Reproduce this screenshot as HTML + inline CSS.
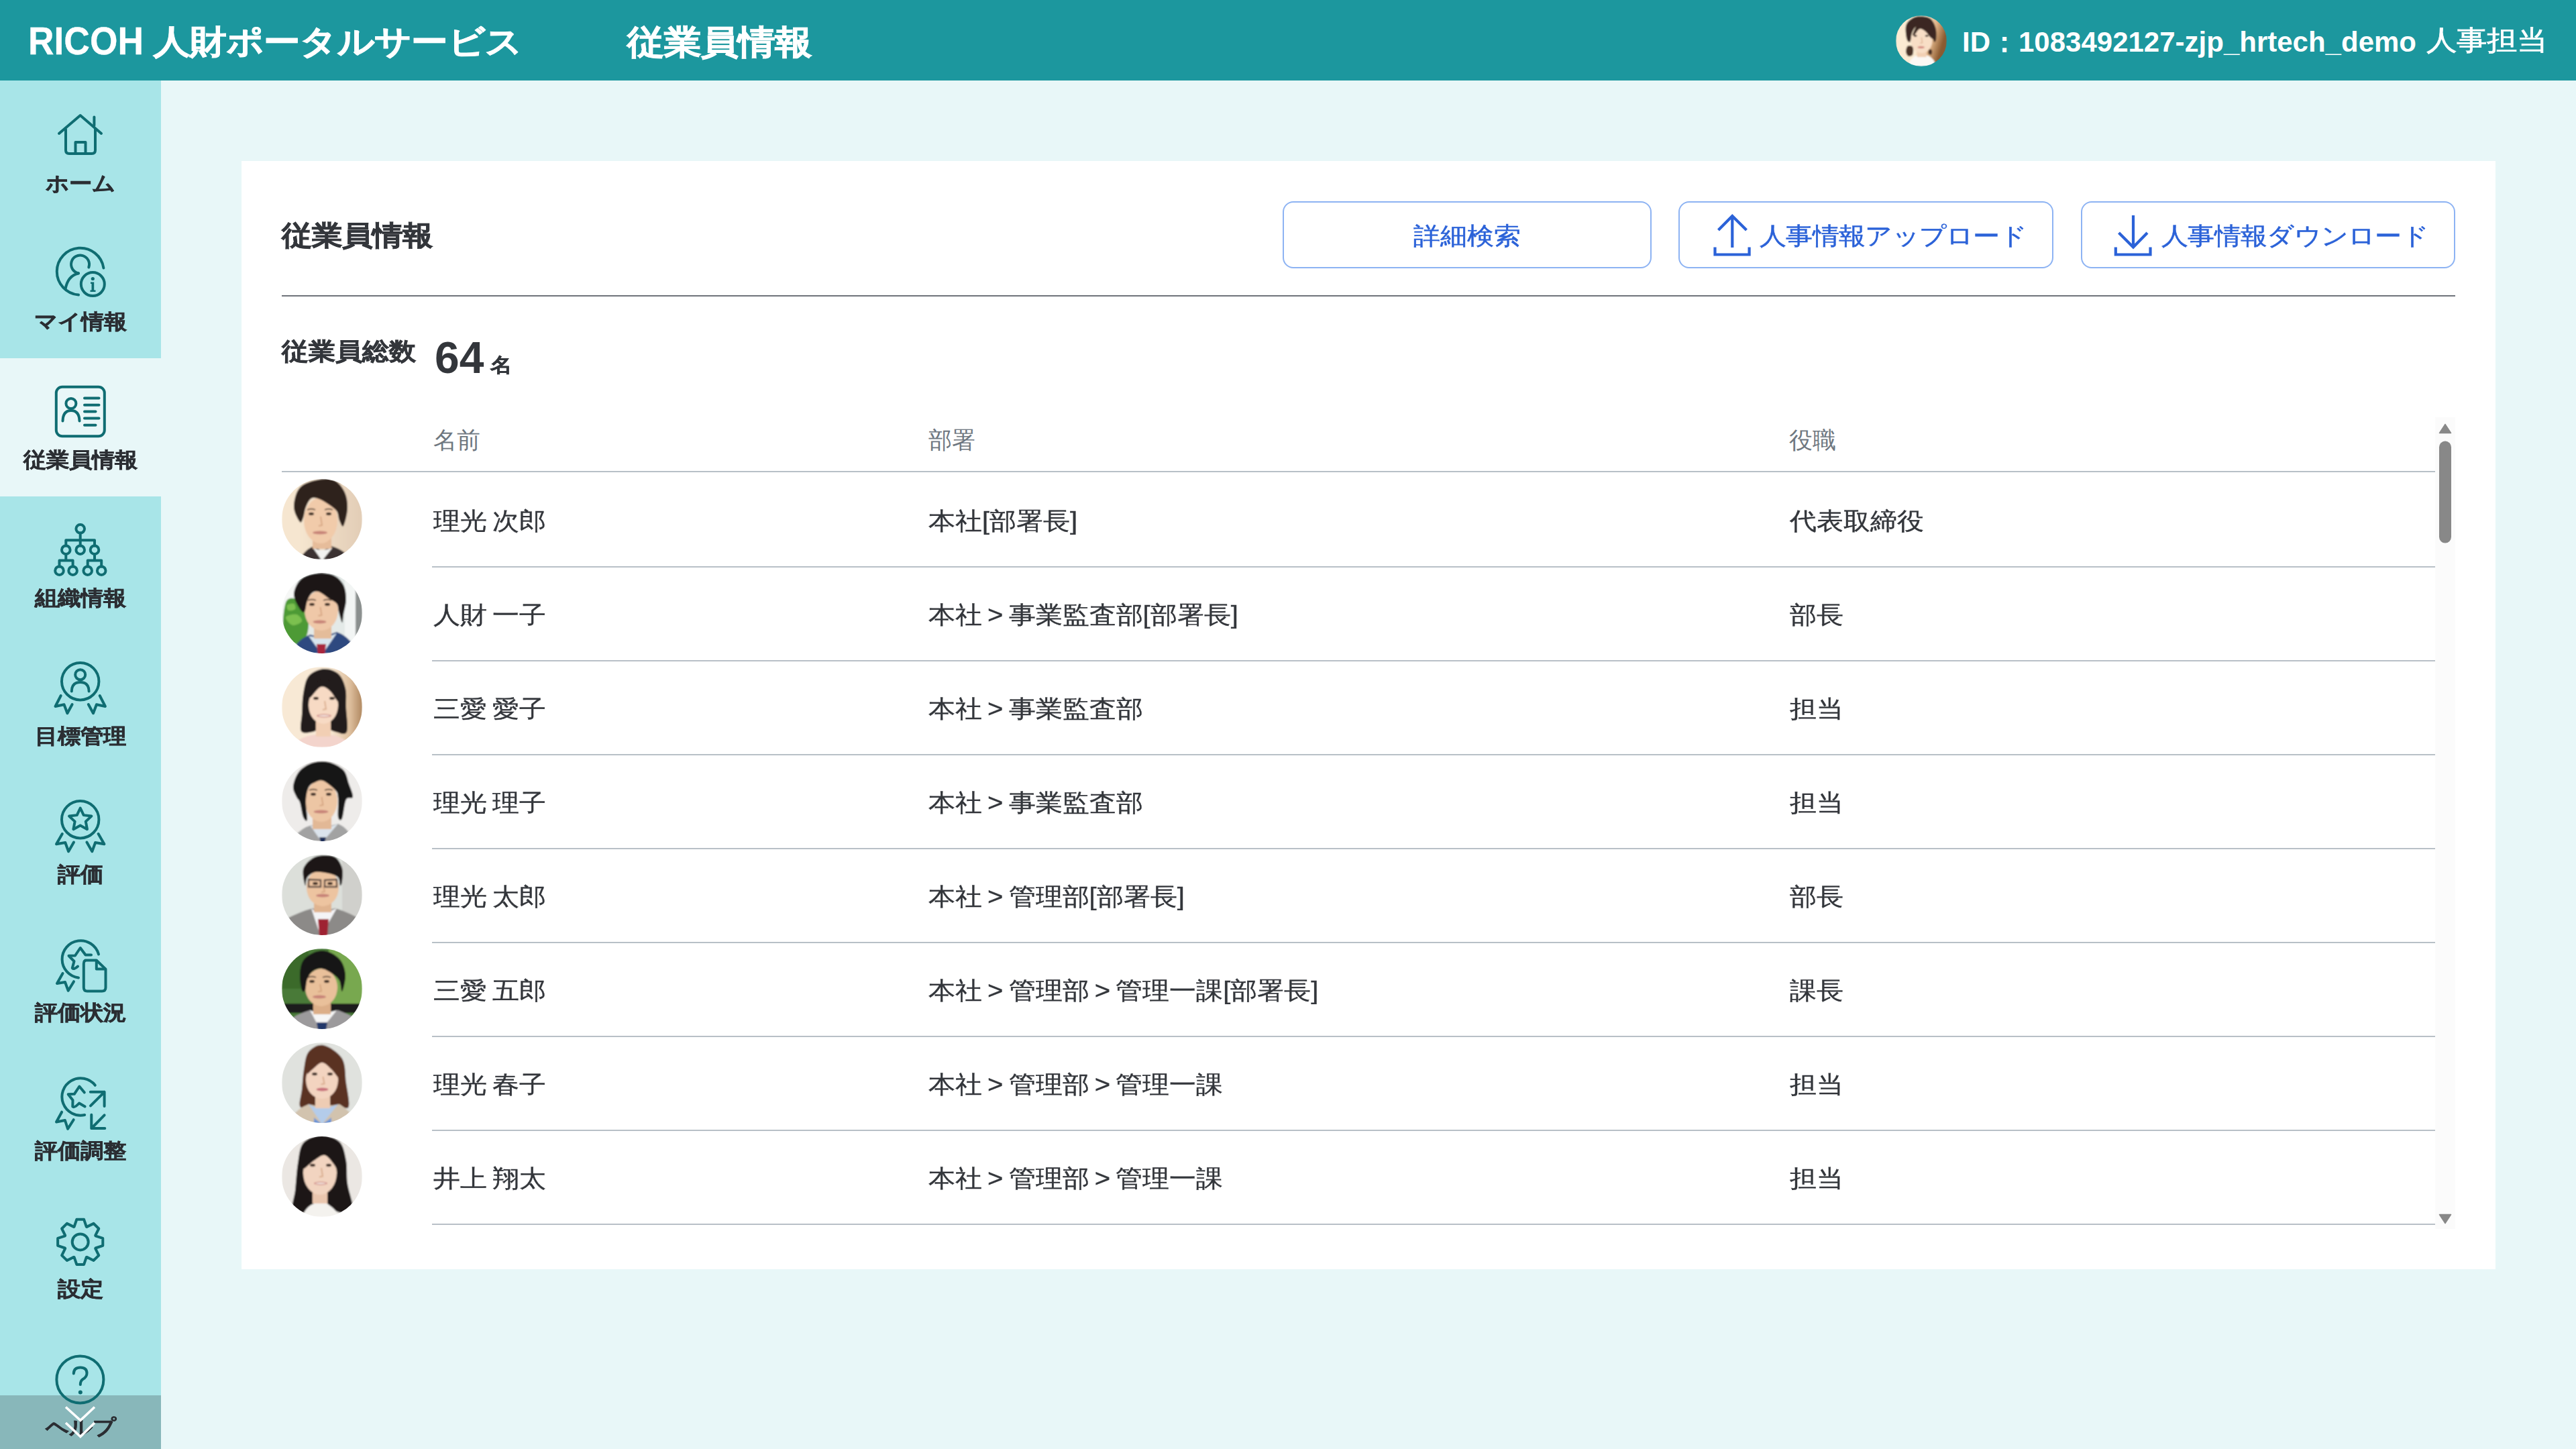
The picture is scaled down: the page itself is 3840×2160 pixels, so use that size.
<!DOCTYPE html>
<html lang="ja"><head><meta charset="utf-8"><style>
html,body{margin:0;padding:0}
body{width:3840px;height:2160px;overflow:hidden;position:relative;background:#E8F7F8;font-family:"Liberation Sans",sans-serif;color:#33363B}
.a{position:absolute;white-space:nowrap;line-height:1}
#hdr{position:absolute;left:0;top:0;width:3840px;height:120px;background:#1C979E}
#side{position:absolute;left:0;top:120px;width:240px;height:2040px;background:#A8E5E8}
#sel{position:absolute;left:0;top:534px;width:240px;height:206px;background:#E8F7F8}
.lbl{position:absolute;left:0;width:240px;text-align:center;font-size:34px;font-weight:bold;color:#2B2E33;line-height:1;white-space:nowrap;-webkit-text-stroke:0.6px #2B2E33}
#card{position:absolute;left:360px;top:240px;width:3360px;height:1652px;background:#fff}
.btn{position:absolute;top:300px;height:100px;box-sizing:border-box;border:2px solid #8DB3F3;border-radius:16px;background:#fff}
.bt{color:#2B62D8;font-size:40px;-webkit-text-stroke:0.5px #2B62D8}
.hline{position:absolute;height:2px;background:#B8C0C7}
.th{color:#6E7780;font-size:35px}
.td{color:#33363B;font-size:40px;word-spacing:-3px;-webkit-text-stroke:0.4px #33363B}
svg{position:absolute;overflow:visible}
.sy{transform:scaleY(0.9);transform-origin:50% 55%}
</style></head><body>

<div id="hdr"></div>
<div class="a sy" style="left:42px;top:35px;font-size:54px;letter-spacing:0.3px;font-weight:bold;color:#fff;-webkit-text-stroke:1px #fff"><span style="font-size:58px;letter-spacing:0;line-height:0;display:inline-block;transform:scale(0.92,1.111);transform-origin:0 0;margin-right:-15px;-webkit-text-stroke:0.3px #fff">RICOH</span> 人財ポータルサービス</div>
<div class="a sy" style="left:935px;top:36px;font-size:55px;font-weight:bold;color:#fff;-webkit-text-stroke:1px #fff">従業員情報</div>
<div class="a" style="left:2925px;top:42px;font-size:42px;font-weight:bold;color:#fff">ID：1083492127-zjp_hrtech_demo</div>
<div class="a sy" style="left:3617px;top:37px;font-size:45px;color:#fff;-webkit-text-stroke:0.8px #fff">人事担当</div>
<div id="side"></div>
<div id="sel"></div>
<div style="position:absolute;left:0;top:2080px;width:240px;height:80px;background:#88B7BA"></div>
<div class="lbl sy" style="top:256px">ホーム</div>
<div class="lbl sy" style="top:462px">マイ情報</div>
<div class="lbl sy" style="top:668px">従業員情報</div>
<div class="lbl sy" style="top:874px">組織情報</div>
<div class="lbl sy" style="top:1080px">目標管理</div>
<div class="lbl sy" style="top:1286px">評価</div>
<div class="lbl sy" style="top:1492px">評価状況</div>
<div class="lbl sy" style="top:1698px">評価調整</div>
<div class="lbl sy" style="top:1904px">設定</div>
<div class="lbl sy" style="top:2110px">ヘルプ</div>
<svg style="left:0;top:0" width="240" height="2160"><path stroke="#0F6D72" stroke-width="4" fill="none" stroke-linecap="round" stroke-linejoin="round" d="M88 199 L119.7 172 L151 199"/><path stroke="#0F6D72" stroke-width="4" fill="none" stroke-linecap="round" stroke-linejoin="round" d="M140.4 174.5 L140.4 187"/><path stroke="#0F6D72" stroke-width="4" fill="none" stroke-linecap="round" stroke-linejoin="round" d="M98 193 L98 224 Q98 229 103 229 L137 229 Q142 229 142 224 L142 193"/><path stroke="#0F6D72" stroke-width="4" fill="none" stroke-linecap="round" stroke-linejoin="round" d="M112.5 229 L112.5 212 L127.5 212 L127.5 229"/><path stroke="#0F6D72" stroke-width="4" fill="none" stroke-linecap="round" stroke-linejoin="round" d="M154.4 399.5 A35 35 0 1 0 117 439.6"/><path stroke="#0F6D72" stroke-width="4" fill="none" stroke-linecap="round" stroke-linejoin="round" d="M132.3 398.5 A13.5 13.5 0 1 0 117 407.3"/><path stroke="#0F6D72" stroke-width="4" fill="none" stroke-linecap="round" stroke-linejoin="round" d="M117 407.5 Q101 411 97.5 431"/><circle stroke="#0F6D72" stroke-width="4" fill="none" stroke-linecap="round" stroke-linejoin="round" cx="138.3" cy="423.6" r="17.5"/><circle fill="#0F6D72" cx="138.3" cy="415.5" r="2.6"/><path fill="#0F6D72" d="M135 420.5 L140.2 420.5 L140.2 432.5 L142.5 432.5 L142.5 435 L134.5 435 L134.5 432.5 L136.5 432.5 L136.5 423 L135 423 Z"/><rect stroke="#0F6D72" stroke-width="4" fill="none" stroke-linecap="round" stroke-linejoin="round" x="83.8" y="576.8" width="72" height="73.5" rx="9"/><circle stroke="#0F6D72" stroke-width="4" fill="none" stroke-linecap="round" stroke-linejoin="round" cx="105.9" cy="601.5" r="7.5" stroke-width="3.5"/><path stroke="#0F6D72" stroke-width="4" fill="none" stroke-linecap="round" stroke-linejoin="round" stroke-width="3.5" d="M93.5 627.5 Q94 612 106 612 Q118 612 118.5 627.5"/><path stroke="#0F6D72" stroke-width="4" fill="none" stroke-linecap="round" stroke-linejoin="round" stroke-width="3.5" d="M126 593.5 L147.5 593.5"/><path stroke="#0F6D72" stroke-width="4" fill="none" stroke-linecap="round" stroke-linejoin="round" stroke-width="3.5" d="M126 603.7 L147.5 603.7"/><path stroke="#0F6D72" stroke-width="4" fill="none" stroke-linecap="round" stroke-linejoin="round" stroke-width="3.5" d="M126 613.6 L142.5 613.6"/><path stroke="#0F6D72" stroke-width="4" fill="none" stroke-linecap="round" stroke-linejoin="round" stroke-width="3.5" d="M126 623.5 L147.5 623.5"/><path stroke="#0F6D72" stroke-width="4" fill="none" stroke-linecap="round" stroke-linejoin="round" stroke-width="3.5" d="M126 633.7 L142.5 633.7"/><circle stroke="#0F6D72" stroke-width="4" fill="none" stroke-linecap="round" stroke-linejoin="round" cx="119.7" cy="788.3" r="6.3"/><path stroke="#0F6D72" stroke-width="4" fill="none" stroke-linecap="round" stroke-linejoin="round" stroke-linecap="butt" d="M119.7 794.6 L119.7 813.4 M98.3 813.4 L98.3 805.2 L141 805.2 L141 813.4"/><circle stroke="#0F6D72" stroke-width="4" fill="none" stroke-linecap="round" stroke-linejoin="round" cx="98.3" cy="819.7" r="6.3"/><circle stroke="#0F6D72" stroke-width="4" fill="none" stroke-linecap="round" stroke-linejoin="round" cx="119.7" cy="819.7" r="6.3"/><circle stroke="#0F6D72" stroke-width="4" fill="none" stroke-linecap="round" stroke-linejoin="round" cx="141" cy="819.7" r="6.3"/><path stroke="#0F6D72" stroke-width="4" fill="none" stroke-linecap="round" stroke-linejoin="round" stroke-linecap="butt" d="M98.3 826 L98.3 835.6 M88.5 844.4 L88.5 835.6 L108.6 835.6 L108.6 844.4 M141 826 L141 835.6 M130.7 844.4 L130.7 835.6 L151.2 835.6 L151.2 844.4"/><circle stroke="#0F6D72" stroke-width="4" fill="none" stroke-linecap="round" stroke-linejoin="round" cx="88.5" cy="850.7" r="6.3"/><circle stroke="#0F6D72" stroke-width="4" fill="none" stroke-linecap="round" stroke-linejoin="round" cx="108.6" cy="850.7" r="6.3"/><circle stroke="#0F6D72" stroke-width="4" fill="none" stroke-linecap="round" stroke-linejoin="round" cx="130.7" cy="850.7" r="6.3"/><circle stroke="#0F6D72" stroke-width="4" fill="none" stroke-linecap="round" stroke-linejoin="round" cx="151.2" cy="850.7" r="6.3"/><circle stroke="#0F6D72" stroke-width="4" fill="none" stroke-linecap="round" stroke-linejoin="round" cx="119.7" cy="1015.7" r="27.7"/><circle stroke="#0F6D72" stroke-width="4" fill="none" stroke-linecap="round" stroke-linejoin="round" cx="119.7" cy="1005.7" r="7.5"/><path stroke="#0F6D72" stroke-width="4" fill="none" stroke-linecap="round" stroke-linejoin="round" d="M106.8 1030.5 Q107 1017 119.7 1017 Q132.4 1017 132.6 1030.5"/><path stroke="#0F6D72" stroke-width="4" fill="none" stroke-linecap="round" stroke-linejoin="round" d="M90.7 1037 L82.5 1053 L95.5 1050.2 L100.4 1063.3 L107.6 1050"/><path stroke="#0F6D72" stroke-width="4" fill="none" stroke-linecap="round" stroke-linejoin="round" d="M148.7 1037 L156.9 1053 L143.9 1050.2 L139 1063.3 L131.8 1050"/><circle stroke="#0F6D72" stroke-width="4" fill="none" stroke-linecap="round" stroke-linejoin="round" cx="119.7" cy="1221.7" r="27.7"/><path stroke="#0F6D72" stroke-width="4" fill="none" stroke-linecap="round" stroke-linejoin="round" d="M119.70 1204.50 L124.70 1215.12 L136.34 1216.59 L127.78 1224.63 L129.99 1236.16 L119.70 1230.50 L109.41 1236.16 L111.62 1224.63 L103.06 1216.59 L114.70 1215.12 Z"/><path stroke="#0F6D72" stroke-width="4" fill="none" stroke-linecap="round" stroke-linejoin="round" d="M92.8 1243 L84 1258.3 L97.3 1256 L102.1 1269.3 L110 1255.5"/><path stroke="#0F6D72" stroke-width="4" fill="none" stroke-linecap="round" stroke-linejoin="round" d="M146.6 1243 L155.4 1258.3 L142.1 1256 L137.3 1269.3 L129.4 1255.5"/><path stroke="#0F6D72" stroke-width="4" fill="none" stroke-linecap="round" stroke-linejoin="round" d="M147 1422.5 A27.7 27.7 0 1 0 117 1457.4"/><path stroke="#0F6D72" stroke-width="4" fill="none" stroke-linecap="round" stroke-linejoin="round" d="M136 1423.5 L127.5 1423.5 L119.7 1413 L112 1424.5 L102.5 1424.8 L110.5 1433 L107.8 1443 Q110 1446 116 1440.5"/><path stroke="#0F6D72" stroke-width="4" fill="none" stroke-linecap="round" stroke-linejoin="round" d="M127 1431.5 L143.8 1431.5 L157.5 1444.6 L157.5 1472 Q157.5 1477.5 152 1477.5 L130 1477.5 Q124.8 1477.5 124.8 1472 L124.8 1436.5 Q124.8 1431.5 129 1431.5 Z"/><path stroke="#0F6D72" stroke-width="4" fill="none" stroke-linecap="round" stroke-linejoin="round" d="M143.8 1432 L143.8 1444.6 L157 1444.6"/><path stroke="#0F6D72" stroke-width="4" fill="none" stroke-linecap="round" stroke-linejoin="round" d="M93.5 1451 L85 1466 L97 1464 L101.7 1476.8 L110 1463.2"/><path stroke="#0F6D72" stroke-width="4" fill="none" stroke-linecap="round" stroke-linejoin="round" d="M141.8 1617.8 A27.7 27.7 0 1 0 126.2 1662"/><path stroke="#0F6D72" stroke-width="4" fill="none" stroke-linecap="round" stroke-linejoin="round" d="M125.8 1628.5 L118.3 1619.5 L110.8 1630.8 L101.7 1631.3 L108.5 1640 L108.3 1649.5 Q111 1652 118 1644.5 L126.6 1649.5"/><path stroke="#0F6D72" stroke-width="4" fill="none" stroke-linecap="round" stroke-linejoin="round" d="M135 1648.3 L155.6 1627.8 M134.8 1627.8 L155.6 1627.8 L155.6 1649"/><path stroke="#0F6D72" stroke-width="4" fill="none" stroke-linecap="round" stroke-linejoin="round" d="M155.6 1662.3 L136.3 1682 M136.3 1661.8 L136.3 1682 L156.3 1682"/><path stroke="#0F6D72" stroke-width="4" fill="none" stroke-linecap="round" stroke-linejoin="round" d="M92.1 1657.7 L84 1672.5 L96.9 1670 L101.1 1682.8 L109.7 1669.2"/><path stroke="#0F6D72" stroke-width="4" fill="none" stroke-linecap="round" stroke-linejoin="round" d="M110.61 1828.65 L114.28 1817.83 L125.12 1817.83 L128.79 1828.65 L129.36 1828.89 L139.60 1823.84 L147.26 1831.50 L142.21 1841.74 L142.45 1842.31 L153.27 1845.98 L153.27 1856.82 L142.45 1860.49 L142.21 1861.06 L147.26 1871.30 L139.60 1878.96 L129.36 1873.91 L128.79 1874.15 L125.12 1884.97 L114.28 1884.97 L110.61 1874.15 L110.04 1873.91 L99.80 1878.96 L92.14 1871.30 L97.19 1861.06 L96.95 1860.49 L86.13 1856.82 L86.13 1845.98 L96.95 1842.31 L97.19 1841.74 L92.14 1831.50 L99.80 1823.84 L110.04 1828.89 Z"/><circle stroke="#0F6D72" stroke-width="4" fill="none" stroke-linecap="round" stroke-linejoin="round" cx="119.7" cy="1851.4" r="12" stroke-width="3.6"/><circle stroke="#0F6D72" stroke-width="4" fill="none" stroke-linecap="round" stroke-linejoin="round" cx="119.4" cy="2056.4" r="35" stroke-width="4.3"/><path stroke="#0F6D72" stroke-width="4" fill="none" stroke-linecap="round" stroke-linejoin="round" d="M109.8 2047.5 Q110 2038.5 119.8 2038.5 Q129.5 2038.5 129.5 2047 Q129.5 2052.5 123.5 2056 Q119.8 2058.5 119.8 2064"/><circle fill="#0F6D72" cx="119.8" cy="2075.5" r="3"/></svg>
<svg style="left:0;top:0" width="240" height="2160"><path d="M98 2097.5 L119.9 2117.3 L141 2097.5 M98 2121 L119.9 2141.5 L141 2121" stroke="#fff" stroke-width="3.6" fill="none"/></svg>
<div id="card"></div>
<div class="a sy" style="left:420px;top:328px;font-size:45px;font-weight:bold;color:#33363B;-webkit-text-stroke:0.8px #33363B">従業員情報</div>
<div class="btn" style="left:1912px;width:550px"></div>
<div class="btn" style="left:2502px;width:559px"></div>
<div class="btn" style="left:3102px;width:558px"></div>
<div class="a bt sy" style="left:2107px;top:331px">詳細検索</div>
<div class="a bt sy" style="left:2623px;top:331px;letter-spacing:-0.7px">人事情報アップロード</div>
<div class="a bt sy" style="left:3222px;top:331px;letter-spacing:-0.7px">人事情報ダウンロード</div>
<svg style="left:0;top:0" width="3840" height="500">
<path d="M2582.3 369 L2582.3 322 M2561.5 343 L2582.3 322 L2603.5 343 M2556.5 368.5 L2556.5 379.5 L2607.6 379.5 L2607.6 368.5" stroke="#2B62D8" stroke-width="4.2" fill="none" stroke-linecap="butt" stroke-linejoin="miter"/>
<path d="M3180 321 L3180 368.5 M3158.5 347 L3180 368.5 L3201 347 M3153.8 368.5 L3153.8 379.5 L3205.5 379.5 L3205.5 368.5" stroke="#2B62D8" stroke-width="4.2" fill="none" stroke-linecap="butt" stroke-linejoin="miter"/>
</svg>
<div class="hline" style="left:420px;top:440px;width:3240px;background:#6E737A"></div>
<div class="a sy" style="left:420px;top:503px;font-size:40px;font-weight:bold;-webkit-text-stroke:0.7px #33363B">従業員総数</div>
<div class="a" style="left:648px;top:500px;font-size:66px;font-weight:bold">64</div>
<div class="a sy" style="left:731px;top:528px;font-size:32px;font-weight:bold;-webkit-text-stroke:0.6px #33363B">名</div>
<div class="a th" style="left:646px;top:638px">名前</div>
<div class="a th" style="left:1384px;top:638px">部署</div>
<div class="a th" style="left:2667px;top:638px">役職</div>
<div class="hline" style="left:420px;top:702px;width:3210px"></div>
<div style="position:absolute;left:3630px;top:622px;width:30px;height:1210px;background:#FBFBFB"></div>
<svg style="left:0;top:0" width="3840" height="2160">
<path d="M3645 632.5 L3653.5 645.5 L3636.5 645.5 Z" fill="#888" stroke="#888" stroke-width="1.5" stroke-linejoin="round"/>
<rect x="3636" y="657.6" width="18" height="152" rx="9" fill="#888"/>
<path d="M3645 1823.5 L3653.5 1810.5 L3636.5 1810.5 Z" fill="#888" stroke="#888" stroke-width="1.5" stroke-linejoin="round"/>
</svg>
<div class="a td sy" style="left:646px;top:756px">理光 次郎</div>
<div class="a td sy" style="left:1384px;top:756px">本社[部署長]</div>
<div class="a td sy" style="left:2668px;top:756px">代表取締役</div>
<div class="hline" style="left:644px;top:844px;width:2986px"></div>
<svg style="left:420px;top:713.5px" width="120" height="120" viewBox="0 0 120 120"><defs><clipPath id="c0"><circle cx="60" cy="60" r="60"/></clipPath><filter id="fc0" x="-10%" y="-10%" width="120%" height="120%"><feGaussianBlur stdDeviation="1.1"/></filter></defs><g clip-path="url(#c0)"><g filter="url(#fc0)"><defs><linearGradient id="g0" x1="0" x2="1"><stop offset="0.2" stop-color="#F6E6D0"/><stop offset="1" stop-color="#E2CDB6"/></linearGradient></defs><rect width="120" height="120" fill="url(#g0)"/><path d="M30 114 Q40 102 48 100 L60 108 L74 100 Q88 104 96 112 L100 120 L24 120 Z" fill="#3A3230"/><path d="M46 102 L60 122 L76 102 Q68 106 60 106 Q52 106 46 102 Z" fill="#F2F2F0"/><rect x="46" y="82" width="28" height="22" fill="#E6BC9A"/><ellipse cx="58" cy="62" rx="25" ry="34" fill="#F1CBAA"/><path d="M38 46 Q44 43.5 50 46 M64 46 Q70 43.5 76 46" stroke="#3A2A22" stroke-width="1.8" fill="none" opacity="0.75"/><ellipse cx="44" cy="52" rx="4" ry="2.2" fill="#3A2A24"/><ellipse cx="70" cy="52" rx="4" ry="2.2" fill="#3A2A24"/><path d="M58.0 56 L60.0 69.0 L55.0 70.0" stroke="#C8936E" stroke-width="2" fill="none" opacity="0.6"/><ellipse cx="57.0" cy="80" rx="11.0" ry="2.6" fill="#C88478"/><path d="M27 64 C24.7 61.3 18.2 50.3 18 42 C17.8 33.7 20.7 20.7 26 14 C31.3 7.3 41.3 4.0 50 2 C58.7 0.0 70.7 -1.0 78 2 C85.3 5.0 90.7 13.0 94 20 C97.3 27.0 98.3 35.7 98 44 C97.7 52.3 94.0 67.0 92 70 C90.0 73.0 87.7 65.7 86 62 C84.3 58.3 84.7 52.0 82 48 C79.3 44.0 74.3 41.0 70 38 C65.7 35.0 60.3 31.5 56 30 C51.7 28.5 47.3 27.0 44 29 C40.7 31.0 38.0 37.2 36 42 C34.0 46.8 33.5 54.3 32 58 C30.5 61.7 29.3 66.7 27 64 Z" fill="#2E211B" /></g></g></svg>
<div class="a td sy" style="left:646px;top:896px">人財 一子</div>
<div class="a td sy" style="left:1384px;top:896px">本社 &gt; 事業監査部[部署長]</div>
<div class="a td sy" style="left:2668px;top:896px">部長</div>
<div class="hline" style="left:644px;top:984px;width:2986px"></div>
<svg style="left:420px;top:853.5px" width="120" height="120" viewBox="0 0 120 120"><defs><clipPath id="c1"><circle cx="60" cy="60" r="60"/></clipPath><filter id="fc1" x="-10%" y="-10%" width="120%" height="120%"><feGaussianBlur stdDeviation="1.1"/></filter></defs><g clip-path="url(#c1)"><g filter="url(#fc1)"><rect width="120" height="120" fill="#F6F7F6"/><rect x="24" width="96" height="120" fill="#E4EAE8"/><rect x="94" width="16" height="120" fill="#F2F5F4"/><rect x="110" width="10" height="120" fill="#8A8F8E"/><path d="M6 44 C8.7 37.0 14.7 37.3 18 38 C21.3 38.7 23.0 44.7 26 48 C29.0 51.3 33.7 53.3 36 58 C38.3 62.7 40.0 69.7 40 76 C40.0 82.3 38.7 91.0 36 96 C33.3 101.0 28.3 105.3 24 106 C19.7 106.7 13.7 104.3 10 100 C6.3 95.7 2.7 89.3 2 80 C1.3 70.7 3.3 51.0 6 44 Z" fill="#4E9A36" /><path d="M8 48 C9.3 46.3 16.0 45.0 18 46 C20.0 47.0 21.3 52.3 20 54 C18.7 55.7 12.0 57.0 10 56 C8.0 55.0 6.7 49.7 8 48 Z" fill="#7CC050" /><path d="M6 66 C7.0 63.3 18.0 61.0 22 62 C26.0 63.0 31.0 69.3 30 72 C29.0 74.7 20.0 79.0 16 78 C12.0 77.0 5.0 68.7 6 66 Z" fill="#7CC050" /><path d="M14 120 Q22 100 42 92 L60 96 L82 88 Q104 96 112 120 Z" fill="#2F4A80"/><path d="M40 94 L60 122 L82 90 Q70 96 60 96 Q48 96 40 94 Z" fill="#D8E6F0"/><path d="M52 106 L66 106 L64 122 L54 122 Z" fill="#A8283E"/><rect x="48" y="76" width="26" height="22" fill="#E4BC9A"/><ellipse cx="59" cy="56" rx="25" ry="30" fill="#EFC8A8"/><path d="M39 41 Q45 38.5 51 41 M62 41 Q68 38.5 74 41" stroke="#3A2A22" stroke-width="1.8" fill="none" opacity="0.75"/><ellipse cx="45" cy="47" rx="4" ry="2.2" fill="#3A2A24"/><ellipse cx="68" cy="47" rx="4" ry="2.2" fill="#3A2A24"/><path d="M57.5 51 L59.5 63.0 L54.5 64.0" stroke="#C8936E" stroke-width="2" fill="none" opacity="0.6"/><ellipse cx="56.5" cy="73" rx="10.0" ry="2.6" fill="#C88478"/><path d="M27 54 C24.3 49.7 17.8 39.3 18 32 C18.2 24.7 22.7 15.2 28 10 C33.3 4.8 42.0 2.2 50 1 C58.0 -0.2 69.0 0.2 76 3 C83.0 5.8 88.7 11.8 92 18 C95.3 24.2 96.0 32.7 96 40 C96.0 47.3 93.0 56.3 92 62 C91.0 67.7 91.2 74.7 90 74 C88.8 73.3 86.3 62.7 85 58 C83.7 53.3 84.5 49.3 82 46 C79.5 42.7 74.5 41.0 70 38 C65.5 35.0 59.2 29.3 55 28 C50.8 26.7 47.8 27.7 45 30 C42.2 32.3 39.8 37.3 38 42 C36.2 46.7 35.8 56.0 34 58 C32.2 60.0 29.7 58.3 27 54 Z" fill="#1A1718" /></g></g></svg>
<div class="a td sy" style="left:646px;top:1036px">三愛 愛子</div>
<div class="a td sy" style="left:1384px;top:1036px">本社 &gt; 事業監査部</div>
<div class="a td sy" style="left:2668px;top:1036px">担当</div>
<div class="hline" style="left:644px;top:1124px;width:2986px"></div>
<svg style="left:420px;top:993.5px" width="120" height="120" viewBox="0 0 120 120"><defs><clipPath id="c2"><circle cx="60" cy="60" r="60"/></clipPath><filter id="fc2" x="-10%" y="-10%" width="120%" height="120%"><feGaussianBlur stdDeviation="1.1"/></filter></defs><g clip-path="url(#c2)"><g filter="url(#fc2)"><defs><linearGradient id="g2" x1="0" x2="1"><stop offset="0.6" stop-color="#F8E9D5"/><stop offset="0.85" stop-color="#DDBE9C"/><stop offset="1" stop-color="#B08860"/></linearGradient></defs><rect width="120" height="120" fill="url(#g2)"/><path d="M62 3 C54.7 3.7 45.0 7.8 40 14 C35.0 20.2 33.7 30.7 32 40 C30.3 49.3 30.5 60.7 30 70 C29.5 79.3 26.3 91.5 29 96 C31.7 100.5 40.5 98.0 46 97 C51.5 96.0 56.3 90.0 62 90 C67.7 90.0 74.2 95.8 80 97 C85.8 98.2 94.3 103.2 97 97 C99.7 90.8 96.3 70.8 96 60 C95.7 49.2 97.0 40.3 95 32 C93.0 23.7 89.5 14.8 84 10 C78.5 5.2 69.3 2.3 62 3 Z" fill="#231A1A" /><path d="M16 120 Q24 102 60 100 Q96 102 104 120 Z" fill="#F3D4CC"/><rect x="51" y="80" width="22" height="24" fill="#F2CFB4"/><ellipse cx="62" cy="57" rx="22" ry="28" fill="#F7DAC4"/><ellipse cx="51" cy="47" rx="4" ry="2.2" fill="#3A2A24"/><ellipse cx="75" cy="47" rx="4" ry="2.2" fill="#3A2A24"/><path d="M64.0 51 L66.0 63.0 L61.0 64.0" stroke="#C8936E" stroke-width="2" fill="none" opacity="0.6"/><ellipse cx="63.0" cy="73" rx="11.0" ry="2.6" fill="#D08C86"/><ellipse cx="63.0" cy="73" rx="9.0" ry="1.2" fill="#F4E8E0"/><path d="M42 46 C40.7 45.3 46.7 30.7 50 26 C53.3 21.3 57.3 18.0 62 18 C66.7 18.0 73.7 21.3 78 26 C82.3 30.7 87.0 41.7 88 46 C89.0 50.3 86.7 53.7 84 52 C81.3 50.3 76.3 39.7 72 36 C67.7 32.3 63.0 28.3 58 30 C53.0 31.7 43.3 46.7 42 46 Z" fill="#231A1A" /></g></g></svg>
<div class="a td sy" style="left:646px;top:1176px">理光 理子</div>
<div class="a td sy" style="left:1384px;top:1176px">本社 &gt; 事業監査部</div>
<div class="a td sy" style="left:2668px;top:1176px">担当</div>
<div class="hline" style="left:644px;top:1264px;width:2986px"></div>
<svg style="left:420px;top:1133.5px" width="120" height="120" viewBox="0 0 120 120"><defs><clipPath id="c3"><circle cx="60" cy="60" r="60"/></clipPath><filter id="fc3" x="-10%" y="-10%" width="120%" height="120%"><feGaussianBlur stdDeviation="1.1"/></filter></defs><g clip-path="url(#c3)"><g filter="url(#fc3)"><rect width="120" height="120" fill="#EEECEA"/><path d="M20 112 Q30 100 44 96 L60 100 L84 94 Q98 100 104 114 L106 120 L18 120 Z" fill="#A2A2A2"/><path d="M42 96 L60 122 L84 94 Q70 100 60 100 Q50 100 42 96 Z" fill="#DCE4EC"/><path d="M56 114 L66 114 L64 122 L58 122 Z" fill="#1E2E58"/><rect x="46" y="80" width="28" height="22" fill="#E2B896"/><ellipse cx="59" cy="60" rx="24" ry="31" fill="#EDC6A4"/><path d="M41 44 Q47 41.5 53 44 M64 44 Q70 41.5 76 44" stroke="#3A2A22" stroke-width="1.8" fill="none" opacity="0.75"/><ellipse cx="47" cy="50" rx="4" ry="2.2" fill="#3A2A24"/><ellipse cx="70" cy="50" rx="4" ry="2.2" fill="#3A2A24"/><path d="M59.5 54 L61.5 66.0 L56.5 67.0" stroke="#C8936E" stroke-width="2" fill="none" opacity="0.6"/><ellipse cx="58.5" cy="76" rx="11.0" ry="2.6" fill="#C88478"/><path d="M22 54 C20.3 50.0 16.3 44.3 17 38 C17.7 31.7 21.2 21.8 26 16 C30.8 10.2 38.7 5.3 46 3 C53.3 0.7 62.3 0.2 70 2 C77.7 3.8 87.0 8.7 92 14 C97.0 19.3 97.7 27.3 100 34 C102.3 40.7 106.7 50.0 106 54 C105.3 58.0 98.7 52.7 96 58 C93.3 63.3 92.0 81.7 90 86 C88.0 90.3 85.0 89.0 84 84 C83.0 79.0 84.7 62.7 84 56 C83.3 49.3 83.7 48.3 80 44 C76.3 39.7 67.0 32.0 62 30 C57.0 28.0 53.7 30.3 50 32 C46.3 33.7 42.3 35.3 40 40 C37.7 44.7 36.3 52.0 36 60 C35.7 68.0 38.7 84.0 38 88 C37.3 92.0 33.8 88.3 32 84 C30.2 79.7 28.7 67.0 27 62 C25.3 57.0 23.7 58.0 22 54 Z" fill="#141212" /></g></g></svg>
<div class="a td sy" style="left:646px;top:1316px">理光 太郎</div>
<div class="a td sy" style="left:1384px;top:1316px">本社 &gt; 管理部[部署長]</div>
<div class="a td sy" style="left:2668px;top:1316px">部長</div>
<div class="hline" style="left:644px;top:1404px;width:2986px"></div>
<svg style="left:420px;top:1273.5px" width="120" height="120" viewBox="0 0 120 120"><defs><clipPath id="c4"><circle cx="60" cy="60" r="60"/></clipPath><filter id="fc4" x="-10%" y="-10%" width="120%" height="120%"><feGaussianBlur stdDeviation="1.1"/></filter></defs><g clip-path="url(#c4)"><g filter="url(#fc4)"><rect width="120" height="120" fill="#DCDFDA"/><rect x="90" width="30" height="120" fill="#D0D0CC"/><path d="M6 96 Q30 84 46 80 L60 84 L80 80 Q100 86 116 96 L120 120 L0 120 Z" fill="#8C8A88"/><path d="M44 80 L58 122 L82 80 Q70 86 60 86 Q50 86 44 80 Z" fill="#F4F4F6"/><path d="M54 96 L70 96 L68 122 L56 122 Z" fill="#9E2030"/><rect x="48" y="64" width="26" height="22" fill="#E0B490"/><ellipse cx="61" cy="49" rx="24" ry="28" fill="#EDC4A0"/><ellipse cx="50" cy="43" rx="4" ry="2.2" fill="#3A2A24"/><ellipse cx="72" cy="43" rx="4" ry="2.2" fill="#3A2A24"/><path d="M62.0 47 L64.0 55.0 L59.0 56.0" stroke="#C8936E" stroke-width="2" fill="none" opacity="0.6"/><ellipse cx="61.0" cy="61" rx="10.0" ry="2.6" fill="#C88478"/><path d="M40 37 L58 38 L58 48 L40 48 Z M64 38 L82 37 L82 48 L64 48 Z" stroke="#5C4A42" stroke-width="2.4" fill="none"/><path d="M35 46 C34.0 44.0 30.3 28.7 32 22 C33.7 15.3 40.0 9.5 45 6 C50.0 2.5 56.2 1.3 62 1 C67.8 0.7 75.3 0.8 80 4 C84.7 7.2 88.3 14.0 90 20 C91.7 26.0 90.5 35.7 90 40 C89.5 44.3 88.0 47.0 87 46 C86.0 45.0 86.8 37.0 84 34 C81.2 31.0 75.7 29.3 70 28 C64.3 26.7 55.3 25.0 50 26 C44.7 27.0 40.5 30.7 38 34 C35.5 37.3 36.0 48.0 35 46 Z" fill="#1B1616" /></g></g></svg>
<div class="a td sy" style="left:646px;top:1456px">三愛 五郎</div>
<div class="a td sy" style="left:1384px;top:1456px">本社 &gt; 管理部 &gt; 管理一課[部署長]</div>
<div class="a td sy" style="left:2668px;top:1456px">課長</div>
<div class="hline" style="left:644px;top:1544px;width:2986px"></div>
<svg style="left:420px;top:1413.5px" width="120" height="120" viewBox="0 0 120 120"><defs><clipPath id="c5"><circle cx="60" cy="60" r="60"/></clipPath><filter id="fc5" x="-10%" y="-10%" width="120%" height="120%"><feGaussianBlur stdDeviation="1.1"/></filter></defs><g clip-path="url(#c5)"><g filter="url(#fc5)"><rect width="120" height="120" fill="#4A7A38"/><rect x="70" width="50" height="90" fill="#78A850"/><rect x="0" width="40" height="60" fill="#3A6A2C"/><rect x="0" y="82" width="120" height="14" fill="#1E1E1E"/><path d="M8 110 Q20 98 42 92 L60 96 L84 92 Q100 98 110 104 L114 120 L6 120 Z" fill="#9C9A9C"/><path d="M42 92 L58 122 L82 92 Q70 96 60 96 Q50 96 42 92 Z" fill="#F6F6F6"/><path d="M52 110 L68 110 L66 122 L54 122 Z" fill="#23396A"/><rect x="47" y="76" width="26" height="22" fill="#DCAE88"/><ellipse cx="59" cy="58" rx="24" ry="28" fill="#E9C09A"/><path d="M39 43 Q45 40.5 51 43 M61 43 Q67 40.5 73 43" stroke="#3A2A22" stroke-width="1.8" fill="none" opacity="0.75"/><ellipse cx="45" cy="49" rx="4" ry="2.2" fill="#3A2A24"/><ellipse cx="67" cy="49" rx="4" ry="2.2" fill="#3A2A24"/><path d="M57.0 53 L59.0 63.5 L54.0 64.5" stroke="#C8936E" stroke-width="2" fill="none" opacity="0.6"/><ellipse cx="56.0" cy="72" rx="10.0" ry="2.6" fill="#C88478"/><path d="M30 62 C28.7 58.3 26.7 47.3 27 40 C27.3 32.7 28.2 23.8 32 18 C35.8 12.2 43.7 7.2 50 5 C56.3 2.8 63.7 2.8 70 5 C76.3 7.2 83.8 12.2 88 18 C92.2 23.8 94.7 32.3 95 40 C95.3 47.7 91.5 62.7 90 64 C88.5 65.3 88.3 52.3 86 48 C83.7 43.7 80.3 41.0 76 38 C71.7 35.0 65.0 30.7 60 30 C55.0 29.3 49.7 31.3 46 34 C42.3 36.7 39.8 41.3 38 46 C36.2 50.7 36.3 59.3 35 62 C33.7 64.7 31.3 65.7 30 62 Z" fill="#151313" /></g></g></svg>
<div class="a td sy" style="left:646px;top:1596px">理光 春子</div>
<div class="a td sy" style="left:1384px;top:1596px">本社 &gt; 管理部 &gt; 管理一課</div>
<div class="a td sy" style="left:2668px;top:1596px">担当</div>
<div class="hline" style="left:644px;top:1684px;width:2986px"></div>
<svg style="left:420px;top:1553.5px" width="120" height="120" viewBox="0 0 120 120"><defs><clipPath id="c6"><circle cx="60" cy="60" r="60"/></clipPath><filter id="fc6" x="-10%" y="-10%" width="120%" height="120%"><feGaussianBlur stdDeviation="1.1"/></filter></defs><g clip-path="url(#c6)"><g filter="url(#fc6)"><rect width="120" height="120" fill="#E0E2DE"/><path d="M62 4 C53.7 2.3 44.8 8.0 40 14 C35.2 20.0 34.7 30.7 33 40 C31.3 49.3 31.0 60.8 30 70 C29.0 79.2 25.2 90.5 27 95 C28.8 99.5 35.5 97.5 41 97 C46.5 96.5 52.3 92.2 60 92 C67.7 91.8 80.3 95.5 87 96 C93.7 96.5 98.5 101.0 100 95 C101.5 89.0 97.7 71.8 96 60 C94.3 48.2 95.7 33.3 90 24 C84.3 14.7 70.3 5.7 62 4 Z" fill="#5A3024" /><path d="M14 112 Q24 98 40 92 L60 96 L86 92 Q100 100 108 114 L110 120 L12 120 Z" fill="#D2C3AE"/><path d="M40 92 L60 122 L84 92 Q70 98 60 98 Q50 98 40 92 Z" fill="#B4CCEA"/><path d="M48 112 L60 122 L74 112 L74 122 L48 122 Z" fill="#6E96D6"/><rect x="50" y="78" width="22" height="20" fill="#EECCB4"/><ellipse cx="60" cy="56" rx="24" ry="28" fill="#F3D4C0"/><ellipse cx="49" cy="47" rx="4" ry="2.2" fill="#3A2A24"/><ellipse cx="72" cy="47" rx="4" ry="2.2" fill="#3A2A24"/><path d="M61.5 51 L63.5 61.5 L58.5 62.5" stroke="#C8936E" stroke-width="2" fill="none" opacity="0.6"/><ellipse cx="60.5" cy="70" rx="9.0" ry="2.6" fill="#C8707A"/><path d="M38 46 C38.0 43.3 42.0 29.0 46 24 C50.0 19.0 56.3 16.0 62 16 C67.7 16.0 75.3 18.7 80 24 C84.7 29.3 89.0 43.0 90 48 C91.0 53.0 88.7 55.3 86 54 C83.3 52.7 78.3 44.0 74 40 C69.7 36.0 64.7 30.0 60 30 C55.3 30.0 49.7 37.3 46 40 C42.3 42.7 38.0 48.7 38 46 Z" fill="#5A3024" /></g></g></svg>
<div class="a td sy" style="left:646px;top:1736px">井上 翔太</div>
<div class="a td sy" style="left:1384px;top:1736px">本社 &gt; 管理部 &gt; 管理一課</div>
<div class="a td sy" style="left:2668px;top:1736px">担当</div>
<div class="hline" style="left:644px;top:1824px;width:2986px"></div>
<svg style="left:420px;top:1693.5px" width="120" height="120" viewBox="0 0 120 120"><defs><clipPath id="c7"><circle cx="60" cy="60" r="60"/></clipPath><filter id="fc7" x="-10%" y="-10%" width="120%" height="120%"><feGaussianBlur stdDeviation="1.1"/></filter></defs><g clip-path="url(#c7)"><g filter="url(#fc7)"><rect width="120" height="120" fill="#EBE7E3"/><path d="M58 -1 C49.0 -0.7 37.7 3.2 32 10 C26.3 16.8 26.0 28.3 24 40 C22.0 51.7 21.3 68.0 20 80 C18.7 92.0 13.0 106.0 16 112 C19.0 118.0 30.7 118.7 38 116 C45.3 113.3 52.7 96.7 60 96 C67.3 95.3 74.3 109.3 82 112 C89.7 114.7 103.3 119.0 106 112 C108.7 105.0 99.7 82.7 98 70 C96.3 57.3 98.0 46.3 96 36 C94.0 25.7 92.3 14.2 86 8 C79.7 1.8 67.0 -1.3 58 -1 Z" fill="#1C1818" /><path d="M30 120 Q38 100 56 98 Q76 100 86 120 Z" fill="#F4F2EE"/><rect x="46" y="78" width="22" height="22" fill="#EAC6AE"/><ellipse cx="57" cy="54" rx="25" ry="33" fill="#F2D4C0"/><ellipse cx="46" cy="43" rx="4" ry="2.2" fill="#3A2A24"/><ellipse cx="70" cy="43" rx="4" ry="2.2" fill="#3A2A24"/><path d="M59.0 47 L61.0 59.5 L56.0 60.5" stroke="#C8936E" stroke-width="2" fill="none" opacity="0.6"/><ellipse cx="58.0" cy="70" rx="10.0" ry="2.6" fill="#D08C86"/><ellipse cx="58.0" cy="70" rx="8.0" ry="1.2" fill="#F4E8E0"/><path d="M32 48 C30.7 45.7 35.7 28.0 40 22 C44.3 16.0 51.7 12.7 58 12 C64.3 11.3 73.0 13.3 78 18 C83.0 22.7 86.7 33.7 88 40 C89.3 46.3 87.7 55.7 86 56 C84.3 56.3 81.7 46.7 78 42 C74.3 37.3 69.0 29.0 64 28 C59.0 27.0 53.3 32.7 48 36 C42.7 39.3 33.3 50.3 32 48 Z" fill="#1C1818" /></g></g></svg>
<svg style="left:2826px;top:23px" width="76" height="76" viewBox="0 0 120 120"><defs><clipPath id="c99"><circle cx="60" cy="60" r="60"/></clipPath><filter id="fc99" x="-10%" y="-10%" width="120%" height="120%"><feGaussianBlur stdDeviation="1.5"/></filter></defs><g clip-path="url(#c99)"><g filter="url(#fc99)"><defs><linearGradient id="hg" x1="0" x2="1" y1="0" y2="0.3"><stop offset="0.55" stop-color="#FBEBD2"/><stop offset="0.78" stop-color="#E0B488"/><stop offset="1" stop-color="#8A5A30"/></linearGradient></defs><rect width="120" height="120" fill="url(#hg)"/><path d="M26 56 C24.3 49.7 21.7 32.3 24 24 C26.3 15.7 34.0 9.7 40 6 C46.0 2.3 53.0 1.7 60 2 C67.0 2.3 76.3 3.3 82 8 C87.7 12.7 91.8 22.0 94 30 C96.2 38.0 95.7 50.7 95 56 C94.3 61.3 91.5 63.7 90 62 C88.5 60.3 89.0 50.7 86 46 C83.0 41.3 76.7 37.3 72 34 C67.3 30.7 62.3 27.0 58 26 C53.7 25.0 49.3 25.3 46 28 C42.7 30.7 40.0 36.3 38 42 C36.0 47.7 36.0 59.7 34 62 C32.0 64.3 27.7 62.3 26 56 Z" fill="#3A2820" /><path d="M28 72 C30.7 70.0 38.0 70.7 40 74 C42.0 77.3 41.7 88.3 40 92 C38.3 95.7 32.7 97.0 30 96 C27.3 95.0 24.3 90.0 24 86 C23.7 82.0 25.3 74.0 28 72 Z" fill="#4A3226" /><path d="M78 80 C79.3 78.7 84.0 80.0 85 82 C86.0 84.0 85.3 90.7 84 92 C82.7 93.3 78.0 92.0 77 90 C76.0 88.0 76.7 81.3 78 80 Z" fill="#4A3226" /><path d="M34 106 Q44 92 61 92 Q80 92 90 106 L94 120 L28 120 Z" fill="#FBF8F4"/><rect x="50" y="80" width="22" height="18" fill="#F2D0B4"/><ellipse cx="61" cy="58" rx="25" ry="31" fill="#F8DEC6"/><path d="M40 44 C41.0 40.3 45.7 27.7 50 24 C54.3 20.3 60.7 20.3 66 22 C71.3 23.7 77.7 28.3 82 34 C86.3 39.7 92.0 53.0 92 56 C92.0 59.0 85.7 55.0 82 52 C78.3 49.0 74.3 41.3 70 38 C65.7 34.7 60.3 30.7 56 32 C51.7 33.3 46.7 44.0 44 46 C41.3 48.0 39.0 47.7 40 44 Z" fill="#3A2820" /><ellipse cx="46" cy="48" rx="4" ry="2.2" fill="#3A2A24"/><ellipse cx="73" cy="48" rx="4" ry="2.2" fill="#3A2A24"/><path d="M60.5 52 L62.5 64.5 L57.5 65.5" stroke="#C8936E" stroke-width="2" fill="none" opacity="0.6"/><ellipse cx="59.5" cy="75" rx="8.0" ry="2.6" fill="#D48A80"/></g></g></svg>
</body></html>
